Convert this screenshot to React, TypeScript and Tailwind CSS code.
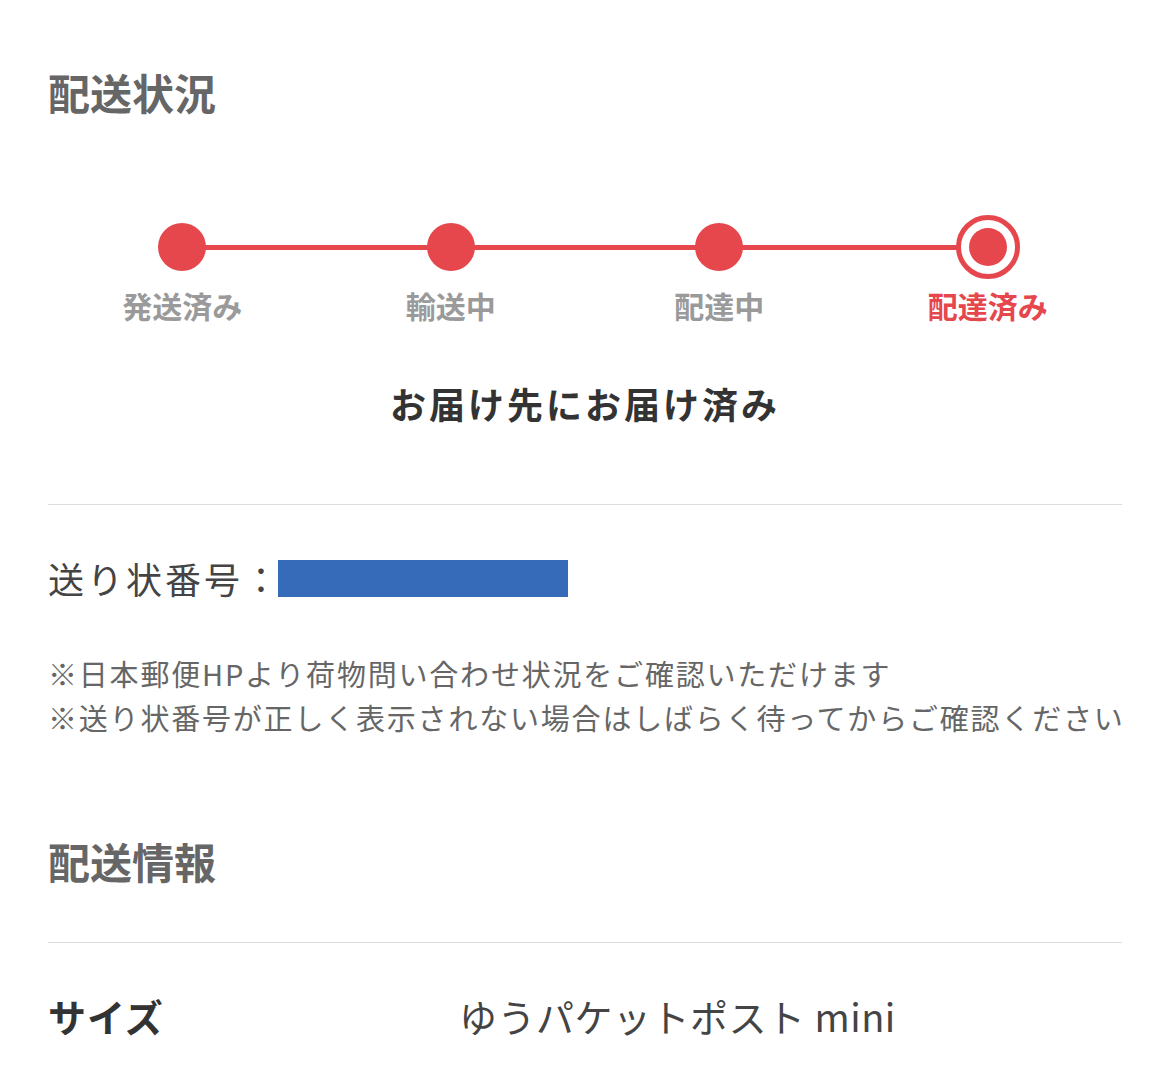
const steps = [
  { label: '発送済み', current: false },
  { label: '輸送中', current: false },
  { label: '配達中', current: false },
  { label: '配達済み', current: true },
];

function Dot({ current }: { current: boolean }) {
  if (current) {
    return (
      <div className="w-[64px] h-[64px] rounded-full border-[5px] border-[#e5474d] bg-white flex items-center justify-center">
        <div className="w-[38px] h-[38px] rounded-full bg-[#e5474d]" />
      </div>
    );
  }
  return <div className="w-[48px] h-[48px] rounded-full bg-[#e5474d]" />;
}

export default function App() {
  return (
    <div
      className="min-h-screen bg-white px-12"
      style={{ fontFamily: '"Noto Sans CJK JP", "Noto Sans", sans-serif' }}
    >
      <h2 className="pt-[71px] text-[42px] leading-[42px] font-bold text-[#666666]">配送状況</h2>

      {/* timeline */}
      <div className="relative mt-[102px] grid grid-cols-4">
        <div className="absolute top-[29.5px] left-[12.5%] right-[12.5%] h-[5px] bg-[#e5474d]" />
        {steps.map((s) => (
          <div key={s.label} className="relative flex flex-col items-center">
            <div className="h-[64px] flex items-center justify-center">
              <Dot current={s.current} />
            </div>
            <div
              className={
                'mt-[11px] text-[30px] leading-[30px] font-bold ' +
                (s.current ? 'text-[#e5474d]' : 'text-[#9a9a9a]')
              }
            >
              {s.label}
            </div>
          </div>
        ))}
      </div>

      <p className="mt-[65px] text-center text-[36px] leading-[36px] font-bold tracking-[3px] text-[#333333]">
        お届け先にお届け済み
      </p>

      <div className="mt-[83px] border-t border-[#dddddd]" />

      {/* tracking number */}
      <div className="mt-[53px] flex items-center h-[40px]">
        <span className="text-[36px] leading-[40px] tracking-[3px] text-[#444444]">送り状番号：</span>
        <span className="-ml-[4px] w-[290px] h-[37px] bg-[#356bb8]" />
      </div>

      <div className="mt-[53px] whitespace-nowrap text-[29px] leading-[44px] tracking-[1.8px] text-[#666666]">
        <p>※日本郵便HPより荷物問い合わせ状況をご確認いただけます</p>
        <p>※送り状番号が正しく表示されない場合はしばらく待ってからご確認ください</p>
      </div>

      <h2 className="mt-[101px] text-[42px] leading-[42px] font-bold text-[#666666]">配送情報</h2>

      <div className="mt-[60px] border-t border-[#dddddd]" />

      <div className="mt-[54px] flex items-center">
        <span className="w-[411px] text-[38px] leading-[38px] font-bold tracking-[1px] text-[#333333]">サイズ</span>
        <span className="text-[38px] leading-[38px] tracking-[0.5px] text-[#444444]">ゆうパケットポスト mini</span>
      </div>
    </div>
  );
}
